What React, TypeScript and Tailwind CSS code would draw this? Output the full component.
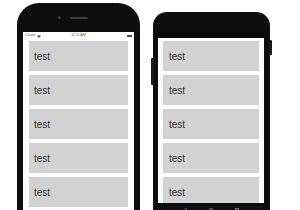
import React from "react";

const items = ["test", "test", "test", "test", "test"];

function Card({ pl }: { pl: string }) {
  return (
    <div className={`h-[30px] shrink-0 bg-[#d2d2d2] flex items-center ${pl} text-[10px] text-[#333]`}>
      test
    </div>
  );
}

export default function App() {
  return (
    <div
      className="w-[300px] h-[210px] overflow-hidden bg-white flex items-start"
      style={{ fontFamily: '"Liberation Sans", Arial, sans-serif' }}
    >
      {/* iPhone */}
      <div className="ml-[17px] mt-[3px] w-[123px] h-[260px] shrink-0 rounded-[22px] bg-[#0e0e0e] flex flex-col px-[6px]">
        <div className="h-[29px] shrink-0 flex items-center justify-center gap-[9px]">
          <div className="w-[3px] h-[3px] rounded-full bg-[#3a3a3a]" />
          <div className="w-[18px] h-[2px] rounded-full bg-[#3a3a3a]" />
          <div className="w-[3px]" />
        </div>
        <div className="bg-white flex-1 flex flex-col">
          <div className="h-[8px] shrink-0 grid grid-cols-3 items-center px-[2px] text-[3.5px] text-[#555] leading-none">
            <div className="flex items-center gap-[1px]">
              <span>Carrier</span>
              <svg width="4" height="3" viewBox="0 0 4 3">
                <path d="M0 1 Q2 -0.5 4 1 L2 3 Z" fill="#555" />
              </svg>
            </div>
            <span className="text-center">11:11 AM</span>
            <div className="justify-self-end w-[5px] h-[2.5px] bg-[#444] rounded-[0.5px]" />
          </div>
          <div className="flex flex-col gap-[4px] px-[6px] pt-[1px]">
            {items.map((_, i) => (
              <Card key={i} pl="pl-[5px]" />
            ))}
          </div>
        </div>
      </div>

      {/* Android */}
      <div className="relative ml-[13px] mt-[12px] w-[117px] shrink-0">
        <div className="absolute left-[-2px] top-[46px] w-[3px] h-[27px] bg-[#1a1a1a] rounded-l-[1px]" />
        <div className="absolute right-[-2px] top-[28px] w-[3px] h-[15px] bg-[#1a1a1a] rounded-r-[1px]" />
        <div className="w-[117px] h-[215px] rounded-t-[14px] rounded-b-[10px] bg-[#0e0e0e] flex flex-col pl-[5px] pr-[6px]">
          <div className="h-[20px] shrink-0" />
          <div className="h-[6px] shrink-0 bg-[#080808]" />
          <div className="h-[165px] shrink-0 bg-white flex flex-col gap-[4px] px-[5px] pt-[3px] overflow-hidden">
            {items.map((_, i) => (
              <Card key={i} pl="pl-[6px]" />
            ))}
          </div>
          <div className="h-[14px] shrink-0 flex items-center justify-center gap-[22px]">
            <svg width="4" height="4" viewBox="0 0 4 4">
              <path d="M3.5 0.3 L0.5 2 L3.5 3.7 Z" fill="none" stroke="#777" strokeWidth="0.6" />
            </svg>
            <div className="w-[4px] h-[4px] rounded-full border-[0.6px] border-[#777]" />
            <div className="w-[3.5px] h-[3.5px] border-[0.6px] border-[#777]" />
          </div>
        </div>
      </div>
    </div>
  );
}
